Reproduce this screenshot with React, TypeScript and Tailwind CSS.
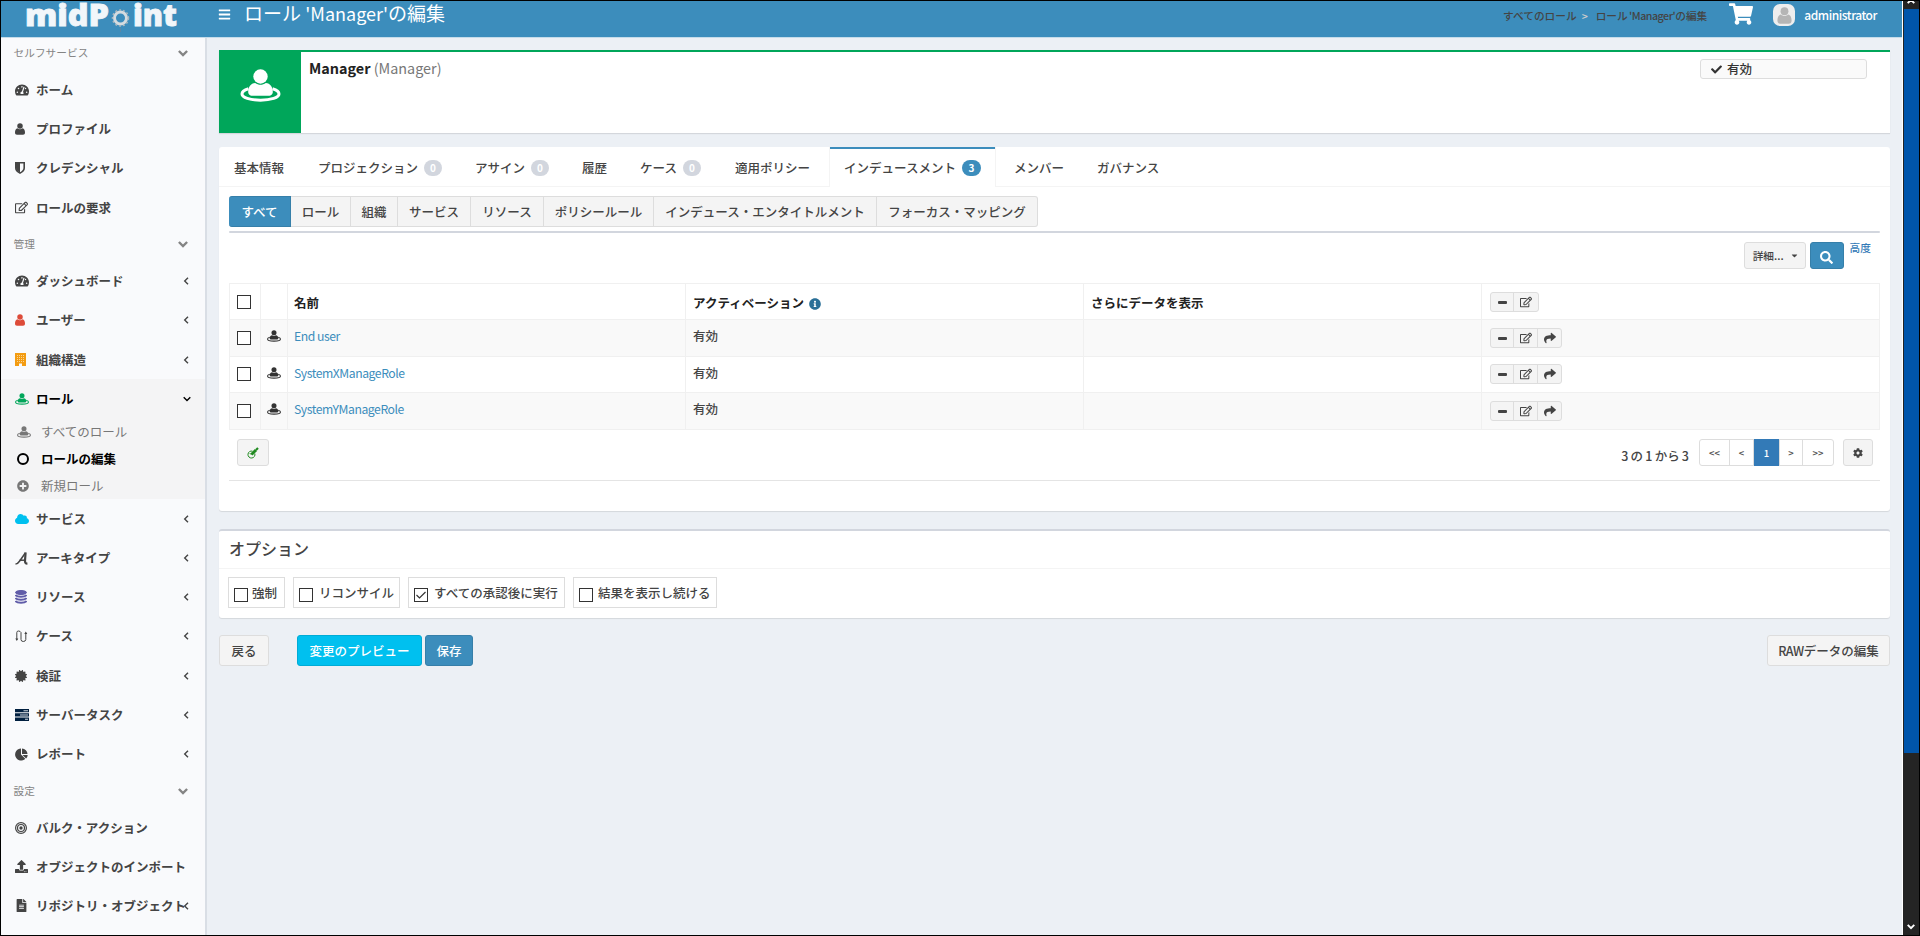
import { useState } from 'react';
import type { ReactNode } from 'react';
import clsx from 'clsx';
import {
  FaBars,
  FaCaretDown,
  FaCertificate,
  FaCheck,
  FaCloud,
  FaCog,
  FaFileAlt,
  FaInfoCircle,
  FaPlusCircle,
  FaRegEdit,
  FaSearch,
  FaShare,
  FaShoppingCart,
  FaTachometerAlt,
  FaUpload,
} from 'react-icons/fa';

interface MenuItem {
  label: string;
  icon: ReactNode;
  expandable?: boolean;
  active?: boolean;
}

function RoleIcon({ className }: { className?: string }) {
  return (
    <svg viewBox="0 0 40 33" className={className} fill="currentColor">
      <circle cx="20" cy="7.5" r="7.2" />
      <path d="M7.700 23c0-5 2.500-8.700 7-9 3.200 2.400 7.400 2.400 10.600 0 4.500.300 7 4 7 9 0 3-2.500 3.800-5 3.800H12.700c-2.500 0-5-.8-5-3.800z" />
      <path
        d="M8 19.800C4 21 1.500 23 1.500 25c0 3.600 8 6.200 18.500 6.200s18.500-2.600 18.500-6.200c0-2-2.500-4-6.500-5.200"
        fill="none"
        stroke="currentColor"
        strokeWidth="3"
      />
    </svg>
  );
}

function UserIcon({ className }: { className?: string }) {
  return (
    <svg viewBox="0 0 20 24" className={className} fill="currentColor">
      <circle cx="10" cy="6" r="5.500" />
      <path d="M5 10.500c3 2.800 7 2.800 10 0 3.500.5 5 4.500 5 8.500 0 3-1.500 4.500-4 4.500H4c-2.500 0-4-1.500-4-4.500 0-4 1.500-8 5-8.500z" />
    </svg>
  );
}

function ShieldIcon() {
  return (
    <svg viewBox="0 0 10 12" className="h-[12px] w-[10px]" fill="none" stroke="currentColor" strokeWidth="1.600">
      <path d="M.8.8h8.400v5.200c0 2.500-2 4-4.200 5.100C2.800 10 .8 8.500.8 6z" />
      <path d="M1 1h4v9.500C3 9.500 1 8 1 6z" fill="currentColor" stroke="none" />
    </svg>
  );
}

function BuildingIcon() {
  return (
    <svg viewBox="0 0 11 13" className="h-[13px] w-[11px]">
      <path d="M0 0h11v13H0z" fill="#f39c12" />
      <path d="M2 2.500h7M2 4.500h7M2 6.500h7M2 8.500h7" stroke="#fbd595" strokeWidth="1" strokeDasharray="1 1" />
      <path d="M4 10.500h3V13H4z" fill="#f9fafc" />
    </svg>
  );
}

function ArchetypeIcon() {
  return (
    <svg viewBox="0 0 13 13" className="h-[13px] w-[13px]" fill="none" stroke="currentColor">
      <path d="M.5 12c2 0 3-1.200 4.200-3L10.300 1" strokeWidth="1.500" />
      <path d="M10.600.3 10 8.500c-.1 2 .5 3.200 2.400 3.200" strokeWidth="2.200" />
      <path d="M4.500 8.200h5" strokeWidth="1.500" />
    </svg>
  );
}

function ResourceIcon() {
  return (
    <svg viewBox="0 0 12 14" className="h-[14px] w-[12px]" fill="none" stroke="#605ca8">
      <ellipse cx="6" cy="2.500" rx="5.500" ry="2" fill="#605ca8" />
      <path d="M.5 5c1.500 2.200 9.500 2.200 11 0M.5 8c1.500 2.200 9.500 2.200 11 0M.5 11c1.500 2.200 9.500 2.200 11 0" strokeWidth="2" />
    </svg>
  );
}

function CaseIcon() {
  return (
    <svg viewBox="0 0 13 13" className="h-[13px] w-[13px]" fill="none" stroke="currentColor" strokeWidth="1">
      <path d="M1.800 10V2.500Q1.800 1 3.500 1T6 2.500v7Q6 11.500 8.300 11.500t2.500-2V3.500" />
      <path d="M.3 8.500h3L1.800 11zM9.300 4h3L10.800 1.500z" fill="currentColor" stroke="none" />
    </svg>
  );
}

function TasksIcon() {
  return (
    <svg viewBox="0 0 14 12" className="h-[12px] w-[14px]" fill="#001f3f">
      <path d="M0 0h14v3.300H0zM0 4.300h14v3.300H0zM0 8.600h14v3.300H0z" />
      <path d="M8.500 1.300h4.500v1H8.500zM5 5.500h8v1H5zM10 9.800h3v1h-3z" fill="#c9d2dc" />
    </svg>
  );
}

function PieIcon() {
  return (
    <svg viewBox="0 0 13 13" className="h-[13px] w-[13px]" fill="currentColor">
      <path d="M6 .5a6 6 0 1 0 4.300 10.300L6 6.500z" />
      <path d="M7 .5V6h5.500A5.600 5.600 0 0 0 7 .5zM7.500 7l3.600 3.600A5.500 5.500 0 0 0 12.700 7z" />
    </svg>
  );
}

function BullseyeIcon() {
  return (
    <svg viewBox="0 0 12 12" className="h-[12px] w-[12px]" fill="none" stroke="currentColor">
      <circle cx="6" cy="6" r="5.400" strokeWidth="1.200" />
      <circle cx="6" cy="6" r="3.500" strokeWidth="1.200" />
      <circle cx="6" cy="6" r="1.700" fill="currentColor" stroke="none" />
    </svg>
  );
}

function AngleIcon({ down }: { down?: boolean }) {
  return (
    <svg viewBox="0 0 8 8" className="h-[8px] w-[8px] shrink-0" fill="none" stroke="currentColor" strokeWidth="1.400">
      <path d={down ? 'M.7 2.200 4 5.500 7.300 2.200' : 'M6 .7 2.700 4 6 7.300'} />
    </svg>
  );
}

function ChevronIcon({ up, className }: { up?: boolean; className?: string }) {
  return (
    <svg viewBox="0 0 10 8" className={clsx('shrink-0', className)} fill="none" stroke="currentColor" strokeWidth="2.400">
      <path d={up ? 'M.9 6 5 2 9.100 6' : 'M.9 2 5 6 9.100 2'} />
    </svg>
  );
}

function Logo() {
  return (
    <svg viewBox="0 0 160 34" className="h-[34px] w-[160px] overflow-visible" fill="#f1f6fa">
      <g fontFamily="'Open Sans', sans-serif" fontSize="30" fontWeight="800" stroke="#f1f6fa" strokeWidth=".8">
        <text x="4" y="25" textLength="84" lengthAdjust="spacingAndGlyphs">midP</text>
        <text x="112" y="25" textLength="44" lengthAdjust="spacingAndGlyphs">int</text>
      </g>
      <circle cx="99.500" cy="17" r="6" fill="none" stroke="#d5dce0" strokeWidth="3" />
      <circle cx="99.500" cy="17" r="8" fill="none" stroke="#a9b7bf" strokeWidth="1.500" strokeDasharray="2 2" />
      <path d="M99.500 27v4" stroke="#5a87a5" />
    </svg>
  );
}

const selfService: MenuItem[] = [
  { label: 'ホーム', icon: <FaTachometerAlt size={14} /> },
  { label: 'プロファイル', icon: <UserIcon className="h-[12px] w-[10px]" /> },
  { label: 'クレデンシャル', icon: <ShieldIcon /> },
  { label: 'ロールの要求', icon: <FaRegEdit size={13} /> },
];

const admin: MenuItem[] = [
  { label: 'ダッシュボード', icon: <FaTachometerAlt size={14} />, expandable: true },
  { label: 'ユーザー', icon: <UserIcon className="h-[12px] w-[10px] text-[#dd4b39]" />, expandable: true },
  { label: '組織構造', icon: <BuildingIcon />, expandable: true },
  { label: 'ロール', icon: <RoleIcon className="h-[12px] w-[14px] text-[#00a65a]" />, active: true },
];

const adminMore: MenuItem[] = [
  { label: 'サービス', icon: <FaCloud size={14} color="#00c0ef" />, expandable: true },
  { label: 'アーキタイプ', icon: <ArchetypeIcon />, expandable: true },
  { label: 'リソース', icon: <ResourceIcon />, expandable: true },
  { label: 'ケース', icon: <CaseIcon />, expandable: true },
  { label: '検証', icon: <FaCertificate size={12} />, expandable: true },
  { label: 'サーバータスク', icon: <TasksIcon />, expandable: true },
  { label: 'レポート', icon: <PieIcon />, expandable: true },
];

const config: MenuItem[] = [
  { label: 'バルク・アクション', icon: <BullseyeIcon /> },
  { label: 'オブジェクトのインポート', icon: <FaUpload size={13} /> },
  { label: 'リポジトリ・オブジェクト', icon: <FaFileAlt size={13} />, expandable: true },
];

const tabs = [
  { label: '基本情報', width: 'w-[84px]' },
  { label: 'プロジェクション', width: 'w-[157px]', count: 0 },
  { label: 'アサイン', width: 'w-[107px]', count: 0 },
  { label: '履歴', width: 'w-[58px]' },
  { label: 'ケース', width: 'w-[95px]', count: 0 },
  { label: '適用ポリシー', width: 'w-[109px]' },
  { label: 'インデュースメント', width: 'w-[165px] mr-[5px]', count: 3 },
  { label: 'メンバー', width: 'w-[83px]' },
  { label: 'ガバナンス', width: 'w-[100px]' },
];

const filters = [
  { label: 'すべて', width: 'w-[62px]' },
  { label: 'ロール', width: 'w-[60px]' },
  { label: '組織', width: 'w-[47px]' },
  { label: 'サービス', width: 'w-[73px]' },
  { label: 'リソース', width: 'w-[73px]' },
  { label: 'ポリシールール', width: 'w-[110px]' },
  { label: 'インデュース・エンタイトルメント', width: 'w-[223px]' },
  { label: 'フォーカス・マッピング', width: 'w-[161px]' },
];

const rows = [
  { name: 'End user', height: 'h-[37px]', offset: 'pt-[11px]' },
  { name: 'SystemXManageRole', height: 'h-[36px]', offset: 'pt-[10px]' },
  { name: 'SystemYManageRole', height: 'h-[37px]', offset: 'pt-[11px]' },
];

const options = [
  { label: '強制', width: 'w-[57px]', gap: 'gap-[4px]' },
  { label: 'リコンサイル', width: 'w-[107px]', gap: 'gap-[6px]' },
  { label: 'すべての承認後に実行', width: 'w-[157px]', gap: 'gap-[6px]' },
  { label: '結果を表示し続ける', width: 'w-[144px]', gap: 'gap-[5px]' },
];

function MenuHeader({ label }: { label: string }) {
  return (
    <div className="flex h-[34.4px] items-center justify-between pl-[12.5px] pr-[17px] text-[10.7px] text-[#848484]">
      <span>{label}</span>
      <ChevronIcon className="h-[8px] w-[10px]" />
    </div>
  );
}

function MenuRow({ item }: { item: MenuItem }) {
  return (
    <div
      className={clsx(
        'flex h-[39.2px] items-center pl-[14px] font-bold',
        item.active ? 'bg-[#f4f4f5] pr-[14px] text-black' : 'pr-[15px] text-[#444]'
      )}
    >
      <span className="w-[21px] shrink-0">{item.icon}</span>
      <span className="w-0 flex-1 whitespace-nowrap">{item.label}</span>
      {item.expandable && <AngleIcon />}
      {item.active && <AngleIcon down />}
    </div>
  );
}

function SubRow({ icon, label, active }: { icon: ReactNode; label: string; active?: boolean }) {
  return (
    <div className={clsx('flex h-[27px] items-center pl-[16px]', active ? 'font-bold text-black' : 'text-[#777]')}>
      <span className="w-[24px]">{icon}</span>
      {label}
    </div>
  );
}

function Sidebar() {
  return (
    <aside className="h-[898px] w-[206px] shrink-0 overflow-hidden border-r-2 border-[#d9dee5] bg-[#f9fafc]">
      <div className="-mt-[2px]">
        <MenuHeader label="セルフサービス" />
        {selfService.map((m) => <MenuRow key={m.label} item={m} />)}
        <MenuHeader label="管理" />
        {admin.map((m) => <MenuRow key={m.label} item={m} />)}
        <div className="bg-[#f4f4f5]">
          <SubRow icon={<RoleIcon className="h-[12px] w-[14px]" />} label="すべてのロール" />
          <SubRow
            icon={<span className="block h-[12px] w-[12px] rounded-full border-2 border-black" />}
            label="ロールの編集"
            active
          />
          <SubRow icon={<FaPlusCircle size={12} />} label="新規ロール" />
        </div>
        {adminMore.map((m) => <MenuRow key={m.label} item={m} />)}
        <MenuHeader label="設定" />
        {config.map((m) => <MenuRow key={m.label} item={m} />)}
      </div>
    </aside>
  );
}

function Header() {
  return (
    <header className="flex h-[37px] shrink-0 items-start border-b border-[#c5dcea] bg-[#3c8dbc] text-white">
      <div className="w-[217px] pl-[20px]">
        <Logo />
      </div>
      <FaBars size={13} className="mt-[7px]" />
      <h1 className="ml-[13px] text-[19px] leading-[23px]">
        ロール <span className="text-[18px]">'Manager'</span>の編集
      </h1>
      <div className="ml-auto flex h-[29px] items-center text-[10.7px] font-medium text-[#444]">
        <span>すべてのロール</span>
        <span className="w-[19px] pl-[5px] text-[#ccc]">&gt;</span>
        <span>
          ロール <span className="-ml-[1px] tracking-[-0.5px]">'Manager'</span>の編集
        </span>
      </div>
      <FaShoppingCart size={24} className="ml-[22px] mt-[1px]" />
      <span className="ml-[20px] mt-[3px] flex h-[22px] w-[22px] items-center justify-center rounded-[7px] bg-[#eee] text-[#b5b5b5]">
        <UserIcon className="h-[17px] w-[15px]" />
      </span>
      <span className="ml-[9px] mr-[25px] flex h-[28px] items-center text-[12px] font-medium tracking-[-0.45px]">
        administrator
      </span>
    </header>
  );
}

function CheckBox({ checked, onChange }: { checked: boolean; onChange: () => void }) {
  return (
    <span
      role="checkbox"
      aria-checked={checked}
      onClick={onChange}
      className="flex h-[14px] w-[14px] shrink-0 items-center justify-center border border-[#333] bg-white"
    >
      {checked && (
        <svg viewBox="0 0 12 12" className="h-[12px] w-[12px]" fill="none" stroke="#333" strokeWidth="1.200">
          <path d="M1.500 6 4.500 9 10.500 3" />
        </svg>
      )}
    </span>
  );
}

function RowActions({ withShare }: { withShare?: boolean }) {
  return (
    <div className="flex h-[20px] w-fit divide-x divide-[#ddd] rounded-[3px] border border-[#ddd] bg-[#f4f4f4] text-[#444]">
      <button className="flex w-[23px] items-center justify-center">
        <span className="h-[3px] w-[9px] rounded-[1px] bg-[#444]" />
      </button>
      <button className="flex w-[24px] items-center justify-center"><FaRegEdit size={12} /></button>
      {withShare && <button className="flex w-[23px] items-center justify-center"><FaShare size={12} /></button>}
    </div>
  );
}

function SummaryCard() {
  return (
    <section className="flex h-[83px] w-[1671px] border-t-2 border-[#00a65a] bg-white shadow-[0_1px_1px_rgba(0,0,0,0.1)]">
      <div className="flex w-[82px] justify-center bg-[#00a65a] pt-[17px]">
        <RoleIcon className="h-[33px] w-[41px] text-white" />
      </div>
      <div className="pl-[8px] pt-[4px] text-[14.4px] leading-[24px] text-[#777]">
        <b className="text-[#222]">Manager</b> (Manager)
      </div>
      <div className="ml-auto mr-[23px] mt-[7px] flex h-[20px] w-[167px] items-center gap-[5px] rounded-[3px] border border-[#ddd] bg-[#fafafa] pl-[10px] font-medium text-[#333]">
        <FaCheck size={11} />
        有効
      </div>
    </section>
  );
}

const cols = 'grid grid-cols-[31px_27px_398px_398px_398px_399px] divide-x divide-[#f0f0f0]';

function InducementTable() {
  const [selected, setSelected] = useState<string[]>([]);

  function toggle(name: string) {
    setSelected(selected.includes(name) ? selected.filter((n) => n !== name) : [...selected, name]);
  }

  function toggleAll() {
    setSelected(selected.length === rows.length ? [] : rows.map((r) => r.name));
  }

  return (
    <div className="mt-[14px] w-[1651px] border border-[#f0f0f0]">
      <div className={clsx(cols, 'h-[35px] font-bold text-[#222]')}>
        <div className="pl-[7px] pt-[11px]">
          <CheckBox checked={selected.length === rows.length} onChange={toggleAll} />
        </div>
        <div />
        <div className="pl-[6px] pt-[10px]">名前</div>
        <div className="flex items-start gap-[5px] pl-[7px] pt-[10px]">
          アクティベーション
          <FaInfoCircle size={12} className="mt-[4px] text-[#2a6f97]" />
        </div>
        <div className="pl-[7px] pt-[10px]">さらにデータを表示</div>
        <div className="pl-[8px] pt-[8px]"><RowActions /></div>
      </div>
      {rows.map((r, i) => (
        <div key={r.name} className={clsx(cols, r.height, 'border-t border-[#f0f0f0]', i % 2 === 0 && 'bg-[#f9f9f9]')}>
          <div className={clsx('pl-[7px]', r.offset)}>
            <CheckBox checked={selected.includes(r.name)} onChange={() => toggle(r.name)} />
          </div>
          <div className="pl-[6px] pt-[10px]"><RoleIcon className="h-[12px] w-[14px] text-[#333]" /></div>
          <div className="pl-[6px] pt-[7px] text-[12.2px] tracking-[-0.45px] text-[#3c8dbc]">{r.name}</div>
          <div className="pl-[7px] pt-[7px] font-medium">有効</div>
          <div />
          <div className={clsx('-mt-[3px] pl-[8px]', r.offset)}><RowActions withShare /></div>
        </div>
      ))}
    </div>
  );
}

function TableFooter() {
  return (
    <div className="flex h-[51px] w-[1651px] items-start border-b border-[#e4e4e4] pl-[8px] pr-[7px] pt-[9px]">
      <button className="flex h-[27px] w-[32px] items-center justify-center rounded-[3px] border border-[#ddd] bg-[#f4f4f4]">
        <svg viewBox="0 0 12 12" className="h-[12px] w-[12px]" fill="none" stroke="#1f8a1f">
          <path d="M5.500 4.200a3.500 3.500 0 1 0 2.300 2.300M2.800 6.200l1.600 1.600" />
          <path d="M4.500 7.500 9 3" strokeWidth="3" />
          <path d="M9 3 11 1" strokeWidth="2.200" />
        </svg>
      </button>
      <span className="ml-auto mr-[10px] mt-[7px] font-medium leading-[20px] [word-spacing:-0.6px]">3 の 1 から 3</span>
      <div className="flex h-[27px] divide-x divide-[#ddd] rounded-[3px] border border-[#ddd] text-[9.5px] font-medium text-[#555]">
        <button className="w-[30px]">&lt;&lt;</button>
        <button className="w-[24px]">&lt;</button>
        <button className="-my-px w-[26px] bg-[#337ab7] text-white">1</button>
        <button className="w-[23px]">&gt;</button>
        <button className="w-[30px]">&gt;&gt;</button>
      </div>
      <button className="ml-[9px] flex h-[27px] w-[30px] items-center justify-center rounded-[3px] border border-[#ddd] bg-[#f4f4f4]">
        <FaCog size={10} />
      </button>
    </div>
  );
}

function DetailsPanel() {
  const [activeTab, setActiveTab] = useState('インデュースメント');
  const [filter, setFilter] = useState('すべて');

  return (
    <section className="mt-[14px] h-[364px] w-[1671px] rounded-[3px] bg-white shadow-[0_1px_1px_rgba(0,0,0,0.1)]">
      {/* Tabs */}
      <div className="flex h-[40px] border-b border-[#f4f4f4] pl-[1px]">
        {tabs.map((t) => (
          <button
            key={t.label}
            onClick={() => setActiveTab(t.label)}
            className={clsx(
              'flex h-[40px] items-center gap-[6px] whitespace-nowrap border-t-2 pb-[1px] pl-[14px] font-medium',
              t.width,
              t.label === activeTab ? 'border-t-[#3c8dbc] bg-white shadow-[-1px_0_#f4f4f4,1px_0_#f4f4f4]' : 'border-t-transparent'
            )}
          >
            {t.label}
            {t.count !== undefined && (
              <span
                className={clsx(
                  'flex h-[16px] items-center justify-center rounded-full text-[10px] font-bold text-white',
                  t.count > 0 ? 'w-[19px] bg-[#3c8dbc]' : 'w-[18px] bg-[#d2d6de]'
                )}
              >
                {t.count}
              </span>
            )}
          </button>
        ))}
      </div>

      <div className="pl-[10px]">
        <div className="mt-[9px] flex h-[31px] w-fit">
          {filters.map((f) => (
            <button
              key={f.label}
              onClick={() => setFilter(f.label)}
              className={clsx(
                'whitespace-nowrap border-y border-r text-center font-medium first:rounded-l-[3px] last:rounded-r-[3px]',
                f.width,
                filter === f.label ? 'border-[#367fa9] bg-[#3c8dbc] text-white' : 'border-[#ddd] bg-[#f4f4f4]'
              )}
            >
              {f.label}
            </button>
          ))}
        </div>

        <div className="mt-[4px] h-[2px] w-[1651px] rounded bg-[#d2d6de]" />

        <div className="mt-[9px] flex h-[27px] w-[1651px] justify-end">
          <button className="flex w-[62px] items-center justify-center gap-[6px] rounded-[3px] border border-[#ddd] bg-[#f4f4f4] pl-[2px] text-[10.7px] font-medium">
            詳細...
            <FaCaretDown size={9} />
          </button>
          <button className="ml-[4px] flex w-[34px] items-center justify-center rounded-[3px] border border-[#367fa9] bg-[#3c8dbc] pt-[3px] text-white">
            <FaSearch size={13} />
          </button>
          <a className="ml-[6px] mr-[9px] text-[10.7px] font-medium leading-[11px] text-[#337ab7]">高度</a>
        </div>

        <InducementTable />
        <TableFooter />
      </div>
    </section>
  );
}

function OptionsPanel() {
  const [checked, setChecked] = useState<string[]>(['すべての承認後に実行']);

  return (
    <section className="mt-[18px] h-[89px] w-[1671px] rounded-[3px] border-t-2 border-[#d2d6de] bg-white shadow-[0_1px_1px_rgba(0,0,0,0.1)]">
      <h3 className="h-[38px] border-b border-[#f4f4f4] pl-[10px] text-[16px] font-medium leading-[34px]">オプション</h3>
      <div className="flex gap-[8px] pl-[9px] pt-[8px]">
        {options.map((o) => (
          <label
            key={o.label}
            className={clsx('flex h-[31px] items-center whitespace-nowrap border border-[#ddd] pl-[5px] font-medium', o.width, o.gap)}
          >
            <span className="pt-[4px]">
              <CheckBox
                checked={checked.includes(o.label)}
                onChange={() =>
                  setChecked(checked.includes(o.label) ? checked.filter((c) => c !== o.label) : [...checked, o.label])
                }
              />
            </span>
            {o.label}
          </label>
        ))}
      </div>
    </section>
  );
}

export default function App() {
  return (
    <div className="flex h-[936px] w-[1920px] overflow-hidden border border-black bg-[#ecf0f5] font-['Noto_Sans_CJK_JP',sans-serif] text-[12.5px] leading-[18px] text-[#444]">
      <div className="flex w-[1901px] flex-col">
        <Header />
        <div className="flex flex-1">
          <Sidebar />
          <main className="pl-[12px] pt-[12px]">
            <SummaryCard />
            <DetailsPanel />
            <OptionsPanel />
            <div className="mt-[17px] flex h-[31px] w-[1671px] font-medium">
              <button className="w-[50px] rounded-[3px] border border-[#ddd] bg-[#f4f4f4]">戻る</button>
              <button className="ml-[28px] w-[125px] rounded-[3px] border border-[#00acd6] bg-[#00c0ef] text-white">
                変更のプレビュー
              </button>
              <button className="ml-[3px] w-[48px] rounded-[3px] border border-[#367fa9] bg-[#3c8dbc] text-white">保存</button>
              <button className="ml-auto w-[123px] rounded-[3px] border border-[#ddd] bg-[#f4f4f4]">
                <span className="tracking-[-0.5px]">RAW</span>データの編集
              </button>
            </div>
          </main>
        </div>
      </div>

      {/* Scrollbar */}
      <div className="flex w-[17px] flex-col items-center border-l border-white bg-[#242424] text-white">
        <div className="flex h-[8px] items-start overflow-hidden">
          <ChevronIcon up className="-mt-[3px] h-[7px] w-[8px]" />
        </div>
        <div className="ml-[1px] h-[744px] w-[15px] bg-[#0055ab]" />
        <ChevronIcon className="mb-[5px] mt-auto h-[7px] w-[8px]" />
      </div>
    </div>
  );
}
